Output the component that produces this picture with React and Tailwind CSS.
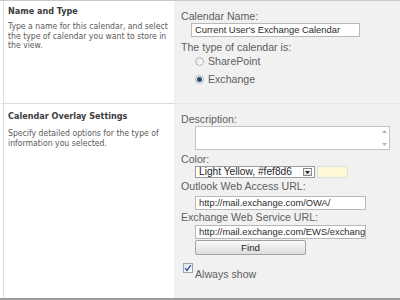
import React from 'react';

function Radio({ checked }) {
  return (
    <span className="relative inline-flex items-center justify-center w-[9px] h-[9px] rounded-full border border-[#b3b3b3] bg-gradient-to-br from-[#e2e2e2] to-white">
      {checked && <span className="w-[5px] h-[5px] rounded-full bg-[#2b4a70]" />}
    </span>
  );
}

function Label({ children, className = '' }) {
  return <div className={`text-[10.6px] leading-[12px] text-[#606060] ${className}`}>{children}</div>;
}

function TextBox({ value, className = '' }) {
  return (
    <div className={`h-[14px] bg-white border border-[#b8b8b8] px-[3px] text-[9.4px] leading-[12px] text-[#2b2b2b] whitespace-nowrap overflow-hidden ${className}`}>
      {value}
    </div>
  );
}

export default function App() {
  return (
    <div className="w-[400px] h-[300px] bg-white overflow-hidden border-t border-[#c9c9c9] font-['Liberation_Sans',Arial,sans-serif]">
      <div className="h-[297px] flex flex-col">
        {/* Name and Type */}
        <div className="flex h-[102px]">
          <div className="w-[171px] ml-[3px] border-l border-[#dcdcdc] pl-[4px] pt-[4px] font-['DejaVu_Sans_Condensed','Liberation_Sans',sans-serif]">
            <div className="text-[9px] leading-[12px] font-bold text-[#3b3b3b]">Name and Type</div>
            <p className="mt-[5px] text-[8.6px] leading-[9.6px] text-[#5a5a5a]">
              Type a name for this calendar, and select<br />
              the type of calendar you want to store in<br />
              the view.
            </p>
          </div>
          <div className="flex-1 bg-[#f1f1f1] pl-[7px] pt-[9px]">
            <Label>Calendar Name:</Label>
            <TextBox value="Current User's Exchange Calendar" className="ml-[10px] mt-[1px] w-[169px]" />
            <Label className="mt-[4px]">The type of calendar is:</Label>
            <div className="ml-[14px] mt-[2px] flex flex-col gap-[6px] text-[10.6px] leading-[12px] text-[#606060]">
              <div className="flex items-center gap-[4px]"><Radio /> SharePoint</div>
              <div className="flex items-center gap-[4px]"><Radio checked /> Exchange</div>
            </div>
          </div>
        </div>

        {/* Calendar Overlay Settings */}
        <div className="flex flex-1 border-t border-[#e6e6e6]">
          <div className="w-[171px] ml-[3px] border-l border-t border-[#dadada] -mt-px pl-[4px] pt-[6px] font-['DejaVu_Sans_Condensed','Liberation_Sans',sans-serif]">
            <div className="text-[9px] leading-[12px] font-bold text-[#3b3b3b]">Calendar Overlay Settings</div>
            <p className="mt-[7px] text-[8.6px] leading-[9.6px] text-[#5a5a5a]">
              Specify detailed options for the type of<br />
              information you selected.
            </p>
          </div>
          <div className="flex-1 bg-[#f1f1f1] pl-[7px] pt-[9px]">
            <Label>Description:</Label>
            <div className="ml-[14px] mt-[1px] w-[195px] h-[24px] bg-white border border-[#c2c2c2] flex justify-end">
              <div className="w-[10px] flex flex-col items-center justify-between py-[3px] text-[#b5b5b5]">
                <svg width="5" height="3" viewBox="0 0 5 3"><path d="M0 3 L2.5 0 L5 3 Z" fill="currentColor" /></svg>
                <svg width="5" height="3" viewBox="0 0 5 3"><path d="M0 0 L2.5 3 L5 0 Z" fill="currentColor" /></svg>
              </div>
            </div>
            <Label className="mt-[3px]">Color:</Label>
            <div className="ml-[14px] mt-[1px] flex items-center gap-[2px]">
              <div className="w-[120px] h-[12px] bg-white border border-[#9c9c9c] flex items-center justify-between pl-[3px] pr-[2px]">
                <span className="text-[10.2px] leading-[10px] text-[#262626] whitespace-nowrap">Light Yellow, #fef8d6</span>
                <span className="w-[9px] h-[8px] border border-[#8a8a8a] bg-gradient-to-b from-white to-[#dcdcdc] flex items-center justify-center">
                  <svg width="5" height="3" viewBox="0 0 5 3"><path d="M0 0 L2.5 3 L5 0 Z" fill="#222" /></svg>
                </span>
              </div>
              <div className="w-[31px] h-[12px] bg-[#fef8d6] border border-[#e0e0e0]" />
            </div>
            <Label className="mt-[2px]">Outlook Web Access URL:</Label>
            <TextBox value="http://mail.exchange.com/OWA/" className="ml-[14px] mt-[4px] w-[171px]" />
            <Label className="mt-[1px]">Exchange Web Service URL:</Label>
            <TextBox value="http://mail.exchange.com/EWS/exchange.asmx" className="ml-[14px] mt-[2px] w-[171px]" />
            <button className="block ml-[14px] mt-px w-[111px] h-[15px] p-0 rounded-[2px] border border-[#a3a3a3] bg-gradient-to-b from-[#fafafa] to-[#dedede] text-[9.8px] leading-[12px] text-[#262626]">
              Find
            </button>
            <div className="mt-[8px] ml-[2px] flex items-end gap-[2px]">
              <span className="w-[10px] h-[10px] border border-[#98a4b6] bg-gradient-to-br from-[#dfe6ef] to-white flex items-center justify-center">
                <svg width="8" height="8" viewBox="0 0 8 8"><path d="M1.2 4.2 L3 6.4 L6.8 1.2" stroke="#2a4c9c" strokeWidth="1.3" fill="none" /></svg>
              </span>
              <span className="text-[10.6px] leading-[12px] text-[#606060] -mb-[7px]">Always show</span>
            </div>
          </div>
        </div>
      </div>
      <div className="h-[2px] bg-[#9a9a9a]" />
    </div>
  );
}
